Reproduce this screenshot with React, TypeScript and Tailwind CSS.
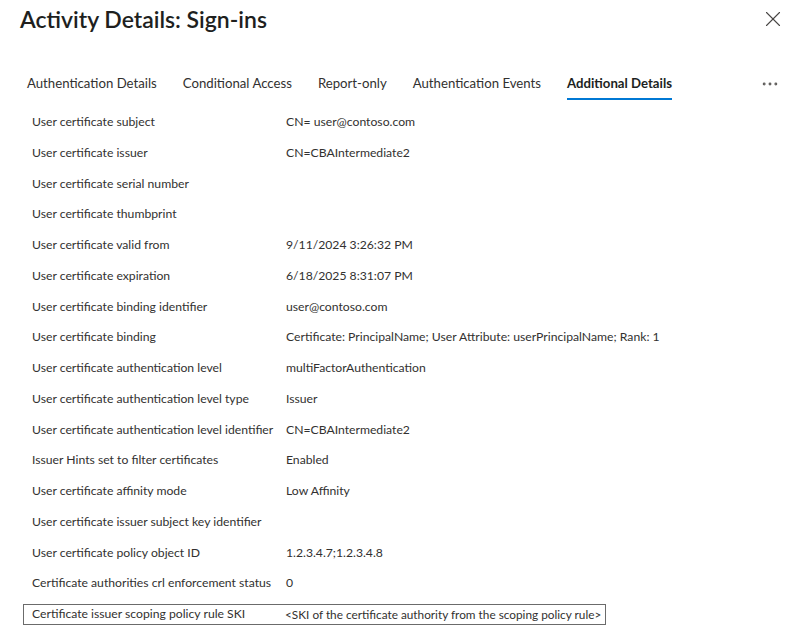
import { X, MoreHorizontal } from 'lucide-react';

const tabs = ['Authentication Details', 'Conditional Access', 'Report-only', 'Authentication Events', 'Additional Details'];

const rows: [string, string][] = [
    ['User certificate subject', 'CN= user@contoso.com'],
    ['User certificate issuer', 'CN=CBAIntermediate2'],
    ['User certificate serial number', ''],
    ['User certificate thumbprint', ''],
    ['User certificate valid from', '9/11/2024 3:26:32 PM'],
    ['User certificate expiration', '6/18/2025 8:31:07 PM'],
    ['User certificate binding identifier', 'user@contoso.com'],
    ['User certificate binding', 'Certificate: PrincipalName; User Attribute: userPrincipalName; Rank: 1'],
    ['User certificate authentication level', 'multiFactorAuthentication'],
    ['User certificate authentication level type', 'Issuer'],
    ['User certificate authentication level identifier', 'CN=CBAIntermediate2'],
    ['Issuer Hints set to filter certificates', 'Enabled'],
    ['User certificate affinity mode', 'Low Affinity'],
    ['User certificate issuer subject key identifier', ''],
    ['User certificate policy object ID', '1.2.3.4.7;1.2.3.4.8'],
    ['Certificate authorities crl enforcement status', '0'],
];

export default function App() {
    return (
        <div className="w-[800px] h-[627px] bg-white text-[#323130] overflow-hidden" style={{ fontFamily: '"Segoe UI", Lato, "Noto Sans", sans-serif' }}>
            <div className="flex items-start justify-between pl-5 pr-[14px] pt-[3px]">
                <h1 className="text-[23px] font-semibold leading-[32px] text-[#201f1e]">Activity Details: Sign-ins</h1>
                <X className="mt-[3px] w-[26px] h-[26px] text-[#484644]" strokeWidth={1} />
            </div>
            <div className="flex items-center mt-[35px] pl-[27px] pr-5 h-[28px]">
                {tabs.map((t) => {
                    const active = t === 'Additional Details';
                    return (
                        <div key={t} className="relative mr-[26px] h-full flex items-center">
                            <span className={`text-[13.2px] whitespace-nowrap ${active ? 'font-bold text-[#201f1e]' : ''}`}>{t}</span>
                            {active && <div className="absolute left-0 right-0 bottom-[-2px] h-[2px] bg-[#0078d4]" />}
                        </div>
                    );
                })}
                <MoreHorizontal className="ml-auto w-[20px] h-[20px] text-[#605e5c]" strokeWidth={1.5} />
            </div>
            <div className="flex flex-col mt-[9px] text-[12.2px]">
                {rows.map(([k, v]) => (
                    <div key={k} className="flex items-center h-[30.75px] pl-[32px] whitespace-nowrap">
                        <div className="w-[254px] shrink-0">{k}</div>
                        <div>{v}</div>
                    </div>
                ))}
                <div className="flex items-center h-[30.75px] pl-[23px] whitespace-nowrap">
                    <div className="flex items-center border border-[#6b6b6b] w-[583px] h-[21px] pl-[8px]">
                        <div className="w-[253px] shrink-0">Certificate issuer scoping policy rule SKI</div>
                        <div className="text-[11.8px]">&lt;SKI of the certificate authority from the scoping policy rule&gt;</div>
                    </div>
                </div>
            </div>
        </div>
    );
}
